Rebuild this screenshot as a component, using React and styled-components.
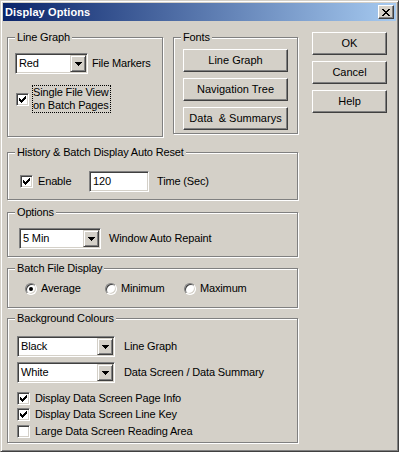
import React from "react";
import styled, { createGlobalStyle } from "styled-components";

const GlobalStyle = createGlobalStyle`
  body {
    margin: 0;
    background: #d4d0c8;
    font-family: "Liberation Sans", Arial, sans-serif;
    font-size: 11px;
    letter-spacing: -0.15px;
    color: #000;
  }
`;

const CHECK = ["......X", ".....XX", "X...XXX", "XX.XXX.", "XXXXX..", ".XXX...", "..X...."];
const ARROW = ["XXXXXXX", ".XXXXX.", "..XXX..", "...X..."];
const CLOSE = ["XX....XX", ".XX..XX.", "..XXXX..", "...XX...", "..XXXX..", ".XX..XX.", "XX....XX"];

// little bitmap glyphs, like the classic windows controls draw them
const Pixels = ({ rows, color = "#000" }) => (
  <svg width={rows[0].length} height={rows.length} shapeRendering="crispEdges" style={{ display: "block" }}>
    {rows.flatMap((r, y) =>
      [...r].map((c, x) =>
        c === "X" ? <rect key={x + "-" + y} x={x} y={y} width="1" height="1" fill={color} /> : null
      )
    )}
  </svg>
);

const Window = styled.div`
  width: 399px;
  height: 452px;
  box-sizing: border-box;
  background: #d4d0c8;
  border: 1px solid;
  border-color: #d4d0c8 #404040 #404040 #d4d0c8;
  box-shadow: inset 1px 1px #fff, inset -1px -1px #808080;
  padding: 2px;
  display: flex;
  flex-direction: column;
`;

const TitleBar = styled.div`
  height: 18px;
  margin-bottom: 1px;
  background: linear-gradient(to right, #0a246a, #a6caf0);
  display: flex;
  align-items: center;
  justify-content: space-between;
  padding: 0 2px;
`;

const TitleText = styled.span`
  color: #fff;
  font-weight: bold;
  font-size: 11px;
  letter-spacing: 0.1px;
`;

const CloseButton = styled.span`
  width: 16px;
  height: 14px;
  box-sizing: border-box;
  background: #d4d0c8;
  border: 1px solid;
  border-color: #fff #404040 #404040 #fff;
  box-shadow: inset -1px -1px #808080;
  display: flex;
  align-items: center;
  justify-content: center;
`;

const Body = styled.div`
  display: flex;
  align-items: flex-start;
  padding: 10px 0 0 4px;
`;

const LeftCol = styled.div`
  width: 291px;
  padding-top: 5px;
  display: flex;
  flex-direction: column;
`;

const RightCol = styled.div`
  margin-left: 14px;
  display: flex;
  flex-direction: column;
  gap: 6px;
`;

const TopRow = styled.div`
  display: flex;
  gap: 10px;
  align-items: flex-start;
`;

const Group = styled.div`
  position: relative;
  box-sizing: border-box;
  width: ${(p) => (p.$w ? p.$w + "px" : "100%")};
  height: ${(p) => p.$h}px;
  margin-top: ${(p) => p.$mt || 0}px;
  border: 1px solid #808080;
  box-shadow: inset 1px 1px #fff, 1px 1px #fff;
  padding: ${(p) => p.$pad};
  display: flex;
  flex-direction: column;
`;

const Legend = styled.span`
  position: absolute;
  top: -7px;
  left: 7px;
  padding: 0 2px;
  line-height: 13px;
  background: #d4d0c8;
`;

const Row = styled.div`
  display: flex;
  align-items: center;
  margin-top: ${(p) => p.$mt || 0}px;
  margin-left: ${(p) => p.$ml || 0}px;
  height: ${(p) => (p.$h ? p.$h + "px" : "auto")};
  line-height: 13px;
`;

const CheckList = styled.div`
  display: flex;
  flex-direction: column;
  margin-top: 7px;
`;

const Label = styled.span`
  margin-left: ${(p) => p.$ml || 0}px;
  width: ${(p) => (p.$w ? p.$w + "px" : "auto")};
  white-space: nowrap;
`;

const sunken = `
  border: 1px solid;
  border-color: #808080 #fff #fff #808080;
  box-shadow: inset 1px 1px #404040, inset -1px -1px #d4d0c8;
`;

const ComboBox = styled.div`
  width: ${(p) => p.$w}px;
  height: 21px;
  box-sizing: border-box;
  ${sunken}
  background: #fff;
  padding: 1px;
  display: flex;
  flex-shrink: 0;
`;

const ComboValue = styled.span`
  flex: 1;
  padding-left: 2px;
  line-height: 17px;
`;

const ComboArrow = styled.span`
  width: 16px;
  height: 17px;
  box-sizing: border-box;
  background: #d4d0c8;
  border: 1px solid;
  border-color: #d4d0c8 #404040 #404040 #d4d0c8;
  box-shadow: inset 1px 1px #fff, inset -1px -1px #808080;
  display: flex;
  align-items: center;
  justify-content: center;
`;

const TextBox = styled.div`
  width: ${(p) => p.$w}px;
  height: 21px;
  box-sizing: border-box;
  ${sunken}
  background: #fff;
  padding: 1px 1px 1px 3px;
  line-height: 17px;
  margin-left: ${(p) => p.$ml || 0}px;
`;

const CheckBox = styled.span`
  width: 13px;
  height: 13px;
  box-sizing: border-box;
  ${sunken}
  background: #fff;
  display: flex;
  align-items: center;
  justify-content: center;
  flex-shrink: 0;
`;

const FocusLabel = styled.span`
  margin-left: 3px;
  border: 1px dotted #000;
  padding: 0 1px 0 0;
  line-height: 13px;
`;

const RadioItem = styled.div`
  width: ${(p) => p.$w}px;
  display: flex;
  align-items: center;
  line-height: 13px;
`;

const RadioCircle = styled.span`
  width: 12px;
  height: 12px;
  box-sizing: border-box;
  border-radius: 50%;
  border: 1px solid;
  border-color: #808080 #fff #fff #808080;
  box-shadow: inset 1px 1px #404040, inset -1px -1px #d4d0c8;
  background: #fff;
  display: flex;
  align-items: center;
  justify-content: center;
  margin-right: 4px;
`;

const RadioDot = styled.span`
  width: 4px;
  height: 4px;
  border-radius: 50%;
  background: #000;
`;

const PushButton = styled.button`
  width: ${(p) => p.$w}px;
  height: 23px;
  box-sizing: border-box;
  padding: 0;
  background: #d4d0c8;
  font: inherit;
  color: #000;
  border: 1px solid;
  border-color: #fff #404040 #404040 #fff;
  box-shadow: inset -1px -1px #808080;
  line-height: 13px;
`;

const FontButtons = styled.div`
  display: flex;
  flex-direction: column;
  gap: 6px;
`;

const Combo = ({ w, value }) => (
  <ComboBox $w={w}>
    <ComboValue>{value}</ComboValue>
    <ComboArrow>
      <Pixels rows={ARROW} />
    </ComboArrow>
  </ComboBox>
);

const Check = ({ checked }) => <CheckBox>{checked && <Pixels rows={CHECK} />}</CheckBox>;

const Radio = ({ w, checked, label }) => (
  <RadioItem $w={w}>
    <RadioCircle>{checked && <RadioDot />}</RadioCircle>
    {label}
  </RadioItem>
);

const CheckRow = ({ checked, label }) => (
  <Row $h={16.5}>
    <Check checked={checked} />
    <Label $ml={5}>{label}</Label>
  </Row>
);

export default function App() {
  return (
    <>
      <GlobalStyle />
      <Window>
        <TitleBar>
          <TitleText>Display Options</TitleText>
          <CloseButton>
            <Pixels rows={CLOSE} />
          </CloseButton>
        </TitleBar>
        <Body>
          <LeftCol>
            <TopRow>
              <Group $w={156} $h={100} $pad="15px 0 0 7px">
                <Legend>Line Graph</Legend>
                <Row>
                  <Combo w={73} value="Red" />
                  <Label $ml={4}>File Markers</Label>
                </Row>
                <Row $mt={11} $ml={1}>
                  <Check checked />
                  <FocusLabel>
                    Single File View
                    <br />
                    on Batch Pages
                  </FocusLabel>
                </Row>
              </Group>
              <Group $w={125} $h={97} $pad="11px 0 0 9px">
                <Legend>Fonts</Legend>
                <FontButtons>
                  <PushButton $w={105}>Line Graph</PushButton>
                  <PushButton $w={105}>Navigation Tree</PushButton>
                  <PushButton $w={105}>Data &nbsp;&amp; Summarys</PushButton>
                </FontButtons>
              </Group>
            </TopRow>

            <Group $h={48} $mt={15} $pad="18px 0 0 12px">
              <Legend>History &amp; Batch Display Auto Reset</Legend>
              <Row>
                <Check checked />
                <Label $ml={5} $w={51}>Enable</Label>
                <TextBox $w={60}>120</TextBox>
                <Label $ml={8}>Time (Sec)</Label>
              </Row>
            </Group>

            <Group $h={45} $mt={12} $pad="15px 0 0 11px">
              <Legend>Options</Legend>
              <Row>
                <Combo w={82} value="5 Min" />
                <Label $ml={8}>Window Auto Repaint</Label>
              </Row>
            </Group>

            <Group $h={40} $mt={11} $pad="13px 0 0 17px">
              <Legend>Batch File Display</Legend>
              <Row>
                <Radio w={80} checked label="Average" />
                <Radio w={79} label="Minimum" />
                <Radio w={80} label="Maximum" />
              </Row>
            </Group>

            <Group $h={125} $mt={10} $pad="17px 0 0 9px">
              <Legend>Background Colours</Legend>
              <Row>
                <Combo w={98} value="Black" />
                <Label $ml={9}>Line Graph</Label>
              </Row>
              <Row $mt={5}>
                <Combo w={98} value="White" />
                <Label $ml={9}>Data Screen / Data Summary</Label>
              </Row>
              <CheckList>
                <CheckRow checked label="Display Data Screen Page Info" />
                <CheckRow checked label="Display Data Screen Line Key" />
                <CheckRow label="Large Data Screen Reading Area" />
              </CheckList>
            </Group>
          </LeftCol>

          <RightCol>
            <PushButton $w={75}>OK</PushButton>
            <PushButton $w={75}>Cancel</PushButton>
            <PushButton $w={75}>Help</PushButton>
          </RightCol>
        </Body>
      </Window>
    </>
  );
}
